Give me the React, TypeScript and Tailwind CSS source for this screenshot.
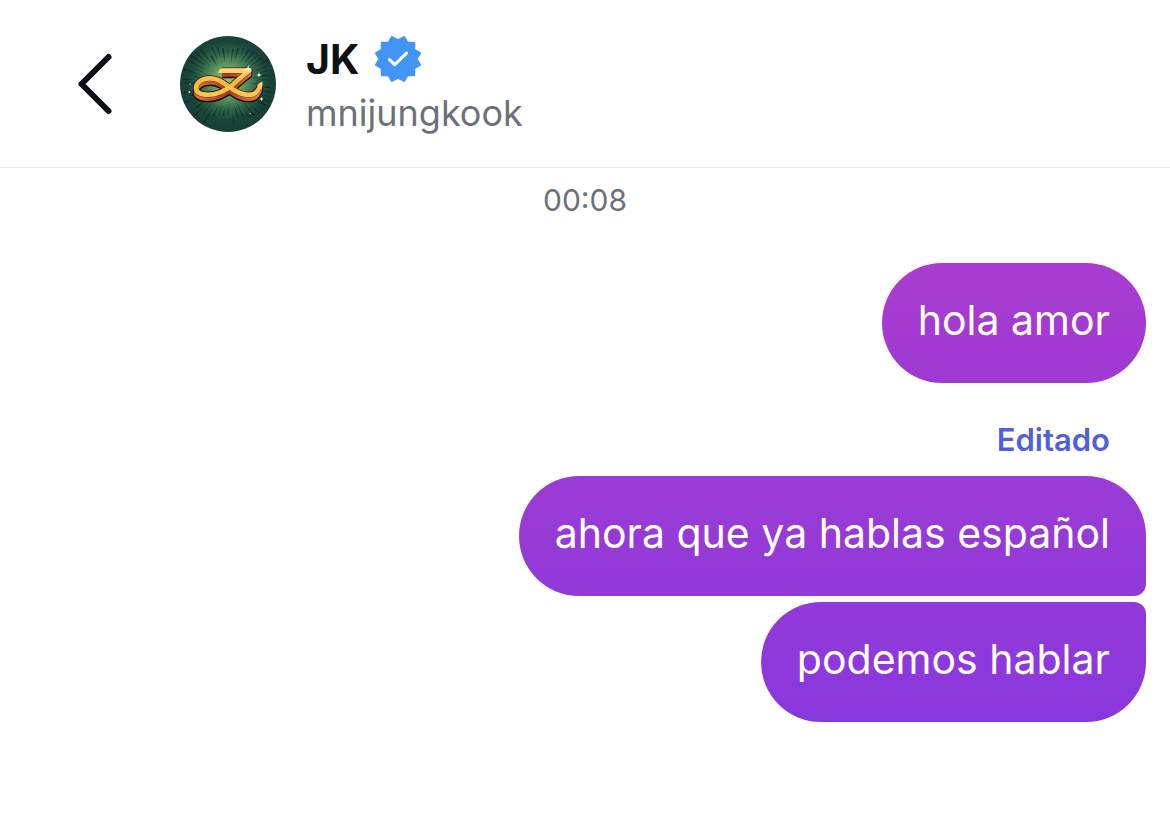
import React from 'react'

interface Message {
  text: string;
  edited?: boolean;
  className: string;
}

const messages: Message[] = [
  {
    text: 'hola amor',
    className: 'mt-[43px] rounded-[60px] from-[#a93dcf] to-[#9f39d3]',
  },
  {
    text: 'ahora que ya hablas español',
    edited: true,
    className: 'rounded-[60px] rounded-br-xl from-[#9b3bd5] to-[#9239d9]',
  },
  {
    text: 'podemos hablar',
    className: 'mt-[6px] rounded-[60px] rounded-tr-xl from-[#9239da] to-[#8938dd]',
  },
]

// thin wedges around the logo, longest on the diagonals
const rays = Array.from({ length: 52 }, (_, i) => {
  const angle = (i / 52) * Math.PI * 2
  const inner = 62 + ((i * 7) % 5) * 6
  const outer = inner + 22 + ((i * 11) % 7) * 4 + Math.abs(Math.sin(angle * 2)) * 22
  const half = 0.012 + (i % 3) * 0.006
  const point = (r: number, a: number) => `${174 + Math.cos(a) * r * 1.08},${172 + Math.sin(a) * r * 0.92}`
  return `${point(inner, angle)} ${point(outer, angle - half)} ${point(outer, angle + half)}`
})

const ribbon = 'M156 134 H238 C222 145 207 160 188 176 C164 196 136 208 107 206 C89 205 78 198 78 186 C79 169 97 157 120 157 C149 157 166 176 188 190 C206 202 226 208 243 206 C260 204 270 188 270 174'
const ribbonFace = 'M150 128 H245 C241 133 236 137 230 141 H143 Z'

const Avatar: React.FC = () => (
  <svg viewBox="30 30 288 288" className="size-24 shrink-0 rounded-full" role="img" aria-label="JK">
    <defs>
      <radialGradient id="glow" cx="174" cy="165" r="144" gradientUnits="userSpaceOnUse">
        <stop offset="0" stopColor="#8fc07a" />
        <stop offset="0.3" stopColor="#6a9f62" />
        <stop offset="0.6" stopColor="#2f664a" />
        <stop offset="0.82" stopColor="#1a453a" />
        <stop offset="1" stopColor="#173f36" />
      </radialGradient>
      <linearGradient id="gold" x1="0" y1="125" x2="0" y2="215" gradientUnits="userSpaceOnUse">
        <stop offset="0" stopColor="#ffdc85" />
        <stop offset="0.45" stopColor="#f6b840" />
        <stop offset="1" stopColor="#ffcb55" />
      </linearGradient>
      <linearGradient id="side" x1="70" y1="0" x2="280" y2="0" gradientUnits="userSpaceOnUse">
        <stop offset="0" stopColor="#e8703a" />
        <stop offset="0.5" stopColor="#a93b29" />
        <stop offset="1" stopColor="#e98a42" />
      </linearGradient>
    </defs>
    <rect x="30" y="30" width="288" height="288" fill="url(#glow)" />
    {rays.map((points) => (
      <polygon key={points} points={points} fill="#0c2a24" opacity="0.75" />
    ))}
    <g fill="none" strokeLinejoin="round">
      <path d={ribbon} transform="translate(0 14)" stroke="#15120f" strokeWidth="18" />
      <path d={ribbon} transform="translate(0 7)" stroke="#15120f" strokeWidth="18" />
      <path d={ribbon} stroke="#15120f" strokeWidth="19" />
      <path d={ribbon} transform="translate(0 12)" stroke="url(#side)" strokeWidth="13" />
      <path d={ribbon} transform="translate(0 6)" stroke="url(#side)" strokeWidth="13" />
      <path d={ribbon} stroke="#5d2118" strokeWidth="16" />
      <path d={ribbon} stroke="url(#gold)" strokeWidth="14" />
    </g>
    <path d={ribbonFace} fill="url(#gold)" />
    <path d="M264 178 C265 173 270 169 277 167 C278 176 277 183 274 190Z" fill="#ffcf62" />
    <path d="M235 117 l2 9 9 3 -9 3 -2 9 -3 -9 -8 -3 8 -3z M267 138 l2 7 6 2 -6 2 -2 6 -2 -6 -6 -2 6 -2z M275 212 l1 5 5 2 -5 2 -1 5 -2 -5 -5 -2 5 -2z" fill="#fff4c9" />
    <g fill="#d3dfb0">
      <circle cx="60" cy="174" r="2" />
      <circle cx="58" cy="198" r="3" />
      <circle cx="241" cy="262" r="2" />
    </g>
  </svg>
)

const VerifiedBadge: React.FC = () => (
  <svg viewBox="0 0 40 40" className="size-[46px] shrink-0" role="img" aria-label="Verificado">
    <path
      d="M20 4 14.8 1 11.9 6H6v6L1 14.9 4 20 1 25.1 6 28v6h5.9l2.9 5L20 36l5.2 3 2.9-5H34v-6l5-2.9L36 20l3-5.1L34 12V6h-5.9l-2.9-5Z"
      fill="#4295f5"
      stroke="#4295f5"
      strokeWidth="2"
      strokeLinejoin="round"
    />
    <path d="m12.6 20.6 4.5 4.3L27.4 14.9" fill="none" stroke="#fff" strokeWidth="2.7" strokeLinecap="round" strokeLinejoin="round" />
  </svg>
)

const Header: React.FC = () => (
  <header className="flex items-center border-b border-[#e6e7ea] pt-9 pb-[35px] pl-[70px]">
    <button type="button" aria-label="Atrás" className="mr-[60px] flex h-16 w-[50px] items-center">
      <svg viewBox="0 0 50 64" className="h-16 w-[50px]" fill="none" stroke="#0c1014" strokeWidth="6" strokeLinecap="round" strokeLinejoin="round">
        <path d="M38.5 5 11.5 32l27 27" />
      </svg>
    </button>
    <Avatar />
    <div className="ml-[30px]">
      <div className="flex items-center gap-4">
        <h1 className="text-[41px] leading-[46px] font-bold text-[#0c1014]">JK</h1>
        <VerifiedBadge />
      </div>
      <p className="mt-3 text-[36px] leading-[38px] text-[#6a717a]">mnijungkook</p>
    </div>
  </header>
)

const App: React.FC = () => {
  return (
    <div className="min-h-screen bg-white font-['Inter',sans-serif]">
      <Header />
      <main className="flex flex-col items-end px-6 pt-3">
        <time className="self-center text-[30px] leading-10 text-[#6a717a]">00:08</time>
        {messages.map((message) => (
          <React.Fragment key={message.text}>
            {message.edited && (
              <span className="mt-[37px] mr-9 mb-4 text-[31px] leading-10 font-semibold text-[#515fdc]">Editado</span>
            )}
            <p className={`bg-linear-to-b px-9 pt-8 pb-[38px] text-[41px] leading-[50px] text-white ${message.className}`}>
              {message.text}
            </p>
          </React.Fragment>
        ))}
      </main>
    </div>
  )
}

export default App
